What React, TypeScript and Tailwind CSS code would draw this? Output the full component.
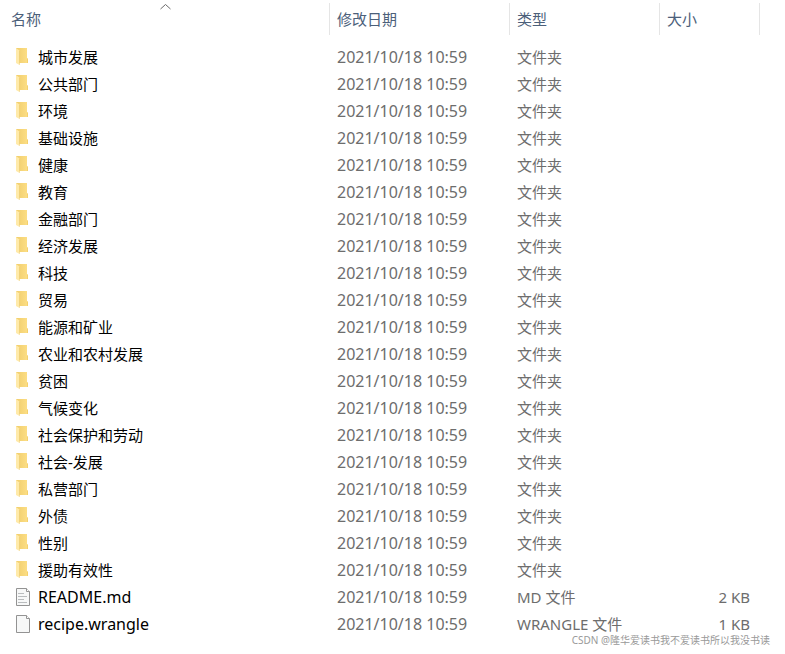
import React from 'react';

type FileKind = 'folder' | 'text' | 'blank';

interface FileEntry {
  name: string;
  kind: FileKind;
  type: string;
  size?: string;
}

const folderNames = [
  '城市发展',
  '公共部门',
  '环境',
  '基础设施',
  '健康',
  '教育',
  '金融部门',
  '经济发展',
  '科技',
  '贸易',
  '能源和矿业',
  '农业和农村发展',
  '贫困',
  '气候变化',
  '社会保护和劳动',
  '社会-发展',
  '私营部门',
  '外债',
  '性别',
  '援助有效性',
];

const entries: FileEntry[] = [
  ...folderNames.map((name): FileEntry => ({ name, kind: 'folder', type: '文件夹' })),
  { name: 'README.md', kind: 'text', type: 'MD 文件', size: '2 KB' },
  { name: 'recipe.wrangle', kind: 'blank', type: 'WRANGLE 文件', size: '1 KB' },
];

const modified = '2021/10/18 10:59';

const FolderIcon = () => (
  <svg width="16" height="20" viewBox="0 0 16 20" className="shrink-0" aria-hidden="true">
    <defs>
      <linearGradient id="folder-back" x1="0" y1="0" x2="1" y2="0">
        <stop offset="0" stopColor="#f0cd6c" />
        <stop offset="1" stopColor="#fddf86" />
      </linearGradient>
    </defs>
    <path d="M1 1H12V11L13 12V16H1Z" fill="url(#folder-back)" />
    <path d="M12 11L13 12V16H12Z" fill="#f3d06e" />
    <path d="M1 1L4.5 3.5V18L1 16Z" fill="#ffeaa9" />
    <path d="M4.5 3.5V18L5 17.5V4Z" fill="#e8c566" />
  </svg>
);

const PageIcon = ({ lines }: { lines: boolean }) => (
  <svg width="16" height="20" viewBox="0 0 16 20" className="shrink-0" aria-hidden="true">
    <path d="M1.5 1.5H11.5L14.5 4.5V18.5H1.5Z" fill="#f7f8f8" stroke="#939393" />
    <path d="M11.5 1.5V4.5H14.5" fill="#fff" stroke="#939393" />
    {lines && <path d="M3 6.5H9M3 9.5H12M3 12.5H9M3 15.5H12" stroke="#b9bcbe" />}
  </svg>
);

const EntryIcon = ({ kind }: { kind: FileKind }) =>
  kind === 'folder' ? <FolderIcon /> : <PageIcon lines={kind === 'text'} />;

const headerCell = 'h-8 border-r border-[#e5e5e5] p-0 pl-[7px] text-left font-normal';

const App: React.FC = () => {
  return (
    <main className="relative min-h-screen overflow-hidden bg-white pt-[3px] font-['Noto_Sans','Noto_Sans_CJK_SC',sans-serif] text-[15px] leading-5 text-[#6d6d6d]">
      <table className="w-full table-fixed border-separate border-spacing-0">
        <colgroup>
          <col className="w-[330px]" />
          <col className="w-[180px]" />
          <col className="w-[150px]" />
          <col className="w-[100px]" />
          <col />
        </colgroup>
        <thead className="text-[#4c607a]">
          <tr>
            <th aria-sort="ascending" className="relative h-8 border-r border-[#e5e5e5] p-0 pl-[11px] text-left font-normal">
              <button type="button">名称</button>
              <svg width="12" height="7" viewBox="0 0 12 7" className="absolute top-0 left-1/2 -translate-x-1/2" aria-hidden="true">
                <path d="M1.5 6L6.5 1.5L11.5 6" fill="none" stroke="#6b6b6b" />
              </svg>
            </th>
            <th className={headerCell}><button type="button">修改日期</button></th>
            <th className={headerCell}><button type="button">类型</button></th>
            <th className={headerCell}><button type="button">大小</button></th>
            <td />
          </tr>
        </thead>
        <tbody>
          <tr aria-hidden="true">
            <td colSpan={5} className="h-2 p-0" />
          </tr>
          {entries.map((entry) => (
            <tr key={entry.name}>
              <td className="h-[27px] p-0 pl-[15px]">
                <div className="flex items-center gap-[7px] text-black">
                  <EntryIcon kind={entry.kind} />
                  <span className={entry.kind === 'folder' ? '' : 'text-[16px] leading-5'}>{entry.name}</span>
                </div>
              </td>
              <td className="p-0 pl-[7px] text-[16px] leading-5">{modified}</td>
              <td className="p-0 pl-[7px]">{entry.type}</td>
              <td className="p-0 pr-[10px] text-right">{entry.size}</td>
              <td className="p-0" />
            </tr>
          ))}
        </tbody>
      </table>
      <p className="absolute right-[15px] bottom-[6px] text-[10px] leading-4 text-[#999999]">
        CSDN @隆华爱读书我不爱读书所以我没书读
      </p>
    </main>
  );
};

export default App;
